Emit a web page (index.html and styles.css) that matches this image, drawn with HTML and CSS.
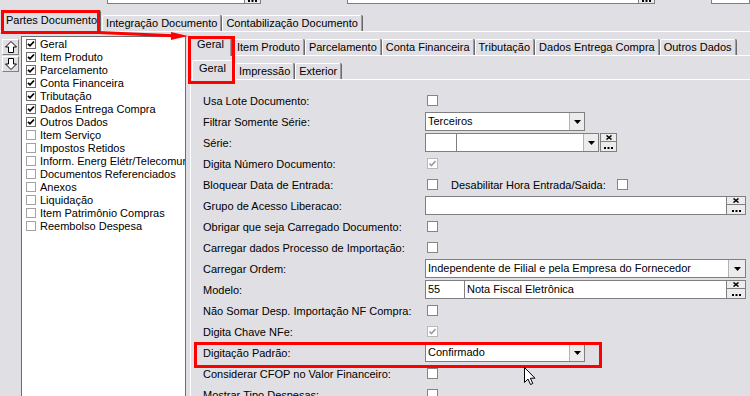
FILE: index.html
```html
<!DOCTYPE html>
<html lang="pt">
<head>
<meta charset="utf-8">
<title>Partes Documento</title>
<link rel="stylesheet" href="styles.css">
</head>
<body>
<div class="screen">
  <div class="topbar">
    <div class="tin tin-a"></div>
    <div class="tbtn"><svg width="9" height="2" viewBox="0 0 9 2"><rect x="0" y="0" width="2" height="2"/><rect x="3.5" y="0" width="2" height="2"/><rect x="7" y="0" width="2" height="2"/></svg></div>
    <div class="tin tin-b"></div>
    <div class="tbtn"><svg width="9" height="2" viewBox="0 0 9 2"><rect x="0" y="0" width="2" height="2"/><rect x="3.5" y="0" width="2" height="2"/><rect x="7" y="0" width="2" height="2"/></svg></div>
    <div class="tin tin-c"></div>
  </div>

  <div class="tabstrip main-strip">
    <div class="tab active">Partes Documento</div>
    <div class="tab">Integração Documento</div>
    <div class="tab">Contabilização Documento</div>
  </div>

  <div class="main-page">
    <div class="arrows">
      <div class="abtn"><svg width="12" height="12" viewBox="0 0 12 12"><path d="M6 0.5 L11.5 6 L8.5 6 L8.5 11.5 L3.5 11.5 L3.5 6 L0.5 6 Z" fill="#fff" stroke="#000" stroke-width="1"/></svg></div>
      <div class="abtn"><svg width="12" height="12" viewBox="0 0 12 12"><path d="M6 11.5 L11.5 6 L8.5 6 L8.5 0.5 L3.5 0.5 L3.5 6 L0.5 6 Z" fill="#fff" stroke="#000" stroke-width="1"/></svg></div>
    </div>

    <div class="list">
      <div class="item"><span class="lcb on"><svg width="8" height="8" viewBox="0 0 8 8"><path d="M1 3.8 L3 5.8 L7 1.5" fill="none" stroke="#000" stroke-width="1.8"/></svg></span>Geral</div>
      <div class="item"><span class="lcb on"><svg width="8" height="8" viewBox="0 0 8 8"><path d="M1 3.8 L3 5.8 L7 1.5" fill="none" stroke="#000" stroke-width="1.8"/></svg></span>Item Produto</div>
      <div class="item"><span class="lcb on"><svg width="8" height="8" viewBox="0 0 8 8"><path d="M1 3.8 L3 5.8 L7 1.5" fill="none" stroke="#000" stroke-width="1.8"/></svg></span>Parcelamento</div>
      <div class="item"><span class="lcb on"><svg width="8" height="8" viewBox="0 0 8 8"><path d="M1 3.8 L3 5.8 L7 1.5" fill="none" stroke="#000" stroke-width="1.8"/></svg></span>Conta Financeira</div>
      <div class="item"><span class="lcb on"><svg width="8" height="8" viewBox="0 0 8 8"><path d="M1 3.8 L3 5.8 L7 1.5" fill="none" stroke="#000" stroke-width="1.8"/></svg></span>Tributação</div>
      <div class="item"><span class="lcb on"><svg width="8" height="8" viewBox="0 0 8 8"><path d="M1 3.8 L3 5.8 L7 1.5" fill="none" stroke="#000" stroke-width="1.8"/></svg></span>Dados Entrega Compra</div>
      <div class="item"><span class="lcb on"><svg width="8" height="8" viewBox="0 0 8 8"><path d="M1 3.8 L3 5.8 L7 1.5" fill="none" stroke="#000" stroke-width="1.8"/></svg></span>Outros Dados</div>
      <div class="item"><span class="lcb"></span>Item Serviço</div>
      <div class="item"><span class="lcb"></span>Impostos Retidos</div>
      <div class="item"><span class="lcb"></span>Inform. Energ Elétr/Telecomun</div>
      <div class="item"><span class="lcb"></span>Documentos Referenciados</div>
      <div class="item"><span class="lcb"></span>Anexos</div>
      <div class="item"><span class="lcb"></span>Liquidação</div>
      <div class="item"><span class="lcb"></span>Item Patrimônio Compras</div>
      <div class="item"><span class="lcb"></span>Reembolso Despesa</div>
    </div>

    <div class="right">
      <div class="tabstrip sub-strip">
        <div class="tab active">Geral</div>
        <div class="tab">Item Produto</div>
        <div class="tab">Parcelamento</div>
        <div class="tab">Conta Financeira</div>
        <div class="tab">Tributação</div>
        <div class="tab">Dados Entrega Compra</div>
        <div class="tab">Outros Dados</div>
      </div>
      <div class="subpage">
        <div class="tabstrip sub2-strip">
          <div class="tab active">Geral</div>
          <div class="tab">Impressão</div>
          <div class="tab">Exterior</div>
        </div>
        <div class="subpage2">
          <div class="form">
            <div class="lbl">Usa Lote Documento:</div>
            <div class="ctl"><span class="cb"></span></div>

            <div class="lbl">Filtrar Somente Série:</div>
            <div class="ctl">
              <div class="combo w160"><span class="val">Terceiros</span><span class="drop"><svg width="7" height="4" viewBox="0 0 7 4"><path d="M0 0 H7 L3.5 4 Z"/></svg></span></div>
            </div>

            <div class="lbl">Série:</div>
            <div class="ctl">
              <div class="combo w174"><span class="cell c31"></span><span class="val"></span><span class="drop"><svg width="7" height="4" viewBox="0 0 7 4"><path d="M0 0 H7 L3.5 4 Z"/></svg></span></div>
              <span class="xbtn xsm"><span class="xb-top"><svg width="6" height="5" viewBox="0 0 6 5"><path d="M0.5 0.5 L5.5 4.5 M5.5 0.5 L0.5 4.5" stroke="#000" stroke-width="1.5"/></svg></span><span class="xb-bot"><svg width="9" height="2" viewBox="0 0 9 2"><rect x="0" y="0" width="2" height="2"/><rect x="3.5" y="0" width="2" height="2"/><rect x="7" y="0" width="2" height="2"/></svg></span></span>
            </div>

            <div class="lbl">Digita Número Documento:</div>
            <div class="ctl"><span class="cb dis"><svg width="9" height="9" viewBox="0 0 9 9"><path d="M1.5 4.5 L3.5 6.5 L7.5 2" fill="none" stroke="#9a9a9a" stroke-width="1.6"/></svg></span></div>

            <div class="lbl">Bloquear Data de Entrada:</div>
            <div class="ctl"><span class="cb"></span><span class="inl">Desabilitar Hora Entrada/Saida:</span><span class="cb cb2"></span></div>

            <div class="lbl">Grupo de Acesso Liberacao:</div>
            <div class="ctl">
              <div class="edit w302"></div>
              <span class="xbtn"><span class="xb-top"><svg width="6" height="5" viewBox="0 0 6 5"><path d="M0.5 0.5 L5.5 4.5 M5.5 0.5 L0.5 4.5" stroke="#000" stroke-width="1.5"/></svg></span><span class="xb-bot"><svg width="9" height="2" viewBox="0 0 9 2"><rect x="0" y="0" width="2" height="2"/><rect x="3.5" y="0" width="2" height="2"/><rect x="7" y="0" width="2" height="2"/></svg></span></span>
            </div>

            <div class="lbl">Obrigar que seja Carregado Documento:</div>
            <div class="ctl"><span class="cb"></span></div>

            <div class="lbl">Carregar dados Processo de Importação:</div>
            <div class="ctl"><span class="cb"></span></div>

            <div class="lbl">Carregar Ordem:</div>
            <div class="ctl">
              <div class="combo w321"><span class="val">Independente de Filial e pela Empresa do Fornecedor</span><span class="drop wide"><svg width="7" height="4" viewBox="0 0 7 4"><path d="M0 0 H7 L3.5 4 Z"/></svg></span></div>
            </div>

            <div class="lbl">Modelo:</div>
            <div class="ctl">
              <div class="edit w302 split"><span class="cell c39">55</span><span class="val">Nota Fiscal Eletrônica</span></div>
              <span class="xbtn"><span class="xb-top"><svg width="6" height="5" viewBox="0 0 6 5"><path d="M0.5 0.5 L5.5 4.5 M5.5 0.5 L0.5 4.5" stroke="#000" stroke-width="1.5"/></svg></span><span class="xb-bot"><svg width="9" height="2" viewBox="0 0 9 2"><rect x="0" y="0" width="2" height="2"/><rect x="3.5" y="0" width="2" height="2"/><rect x="7" y="0" width="2" height="2"/></svg></span></span>
            </div>

            <div class="lbl">Não Somar Desp. Importação NF Compra:</div>
            <div class="ctl"><span class="cb"></span></div>

            <div class="lbl">Digita Chave NFe:</div>
            <div class="ctl"><span class="cb dis"><svg width="9" height="9" viewBox="0 0 9 9"><path d="M1.5 4.5 L3.5 6.5 L7.5 2" fill="none" stroke="#9a9a9a" stroke-width="1.6"/></svg></span></div>

            <div class="lbl">Digitação Padrão:</div>
            <div class="ctl">
              <div class="combo w160"><span class="val">Confirmado</span><span class="drop"><svg width="7" height="4" viewBox="0 0 7 4"><path d="M0 0 H7 L3.5 4 Z"/></svg></span></div>
            </div>

            <div class="lbl">Considerar CFOP no Valor Financeiro:</div>
            <div class="ctl"><span class="cb"></span></div>

            <div class="lbl">Mostrar Tipo Despesas:</div>
            <div class="ctl"><span class="cb"></span></div>
          </div>
        </div>
      </div>
    </div>
  </div>

  <div class="mark mark-partes"></div>
  <div class="mark mark-geral"></div>
  <div class="mark mark-padrao"></div>
  <svg class="annot" width="750" height="396" viewBox="0 0 750 396">
    <path d="M99 32.5 L173 35.8" stroke="#ff0000" stroke-width="3" fill="none"/>
    <path d="M171 32 L188 36 L171 40 Z" fill="#ff0000"/>
  </svg>
  <svg class="cursor" width="13" height="19" viewBox="0 0 13 19">
    <path d="M0.5 0.5 L0.5 15.5 L4 12 L6.5 17.5 L8.8 16.5 L6.4 11.2 L11 11.2 Z" fill="#fff" stroke="#000" stroke-width="1"/>
  </svg>
</div>
</body>
</html>
```

FILE: styles.css
```css
* { box-sizing: border-box; }
html, body { margin: 0; padding: 0; }
body {
  background: #e0dfe3;
  font-family: "Liberation Sans", Arial, sans-serif;
  font-size: 11px;
  color: #000;
}
.screen {
  position: relative;
  width: 750px;
  height: 396px;
  overflow: hidden;
}

/* top partially visible fields */
.topbar { display: flex; height: 4px; padding-left: 107px; }
.tin { height: 4px; background: #fff; border: 1px solid #7f7f7f; border-top: 0; }
.tin-a { width: 143px; }
.tin-b { width: 302px; margin-left: 86px; }
.tin-c { width: 40px; margin-left: 56px; }
.tbtn {
  width: 17px; height: 4px; background: #ececec;
  border: 1px solid #7f7f7f; border-top: 0; border-left: 0;
  display: flex; justify-content: center; align-items: flex-start;
}
.tbtn svg, .xb-bot svg { fill: #000; display: block; }

/* tabs */
.tabstrip { display: flex; align-items: flex-end; }
.tab {
  height: 16px; line-height: 15px; padding: 0 3px;
  border-top: 1px solid #fff; border-left: 1px solid #fff;
  border-right: 1px solid #9d9da1;
  box-shadow: 1px 0 0 #6a6a6e;
  border-radius: 2px 2px 0 0;
  margin-right: 1px;
  white-space: nowrap;
  background: #e0dfe3;
}
.tab.active {
  position: relative; z-index: 1;
  height: 20px; line-height: 15px; padding: 0 6px;
  margin-bottom: -1px;
  margin-right: 2px;
}
.main-strip { height: 27px; padding-left: 3px; }
.main-strip .tab.active { height: 22px; line-height: 19px; padding: 0 2px; }
.sub-strip { height: 23px; padding-left: 4px; }
.sub2-strip { height: 23px; padding-left: 1px; }

/* main page */
.main-page {
  display: flex;
  height: 366px;
  border-top: 1px solid #fff;
}
.arrows { width: 21px; padding: 7px 0 0 2px; flex: none; }
.abtn {
  width: 17px; height: 16px; margin-bottom: 1px;
  border-top: 1px solid #fff; border-left: 1px solid #fff;
  border-right: 1px solid #808080; border-bottom: 1px solid #808080;
  display: flex; align-items: center; justify-content: center;
}
.abtn svg { display: block; }

.list {
  flex: none;
  width: 165px;
  margin-top: 4px;
  height: 400px;
  background: #fff;
  border: 1px solid #6e6e6e;
  padding: 0 0 0 4px;
  overflow: hidden;
}
.item {
  display: flex; align-items: center;
  height: 13px; white-space: nowrap;
}
.lcb {
  flex: none;
  width: 10px; height: 10px; margin-right: 4px;
  border: 1px solid #a2a2a2; background: #fff;
  display: flex; align-items: center; justify-content: center;
}
.lcb.on { border-color: #6e6e6e; }
.lcb svg { display: block; }

.right { flex: 1; min-width: 0; }
.subpage {
  margin-left: 4px;
  border-top: 1px solid #fff;
  border-left: 1px solid #fff;
  height: 400px;
}
.subpage2 {
  border-top: 1px solid #fff;
  padding: 10px 0 0 12px;
}

/* form */
.form {
  display: grid;
  grid-template-columns: 222px auto;
  grid-auto-rows: 21px;
  align-items: center;
}
.lbl { white-space: nowrap; }
.ctl { display: flex; align-items: center; }
.cb {
  display: flex; align-items: center; justify-content: center;
  width: 11px; height: 11px; margin-left: 2px;
  border: 1px solid #858585; background: #fff;
}
.cb.dis { border-color: #b9b9b9; }
.cb svg { display: block; }
.inl { margin-left: 13px; white-space: nowrap; }
.cb2 { margin-left: 11px; }

.combo, .edit {
  display: flex; height: 19px;
  background: #fff; border: 1px solid #7f7f7f;
  overflow: hidden;
}
.w160 { width: 160px; }
.w174 { width: 174px; }
.w302 { width: 302px; }
.w321 { width: 321px; }
.val { flex: 1; min-width: 0; padding-left: 2px; line-height: 17px; white-space: nowrap; overflow: hidden; }
.cell { flex: none; border-right: 1px solid #7f7f7f; padding-left: 2px; line-height: 17px; }
.c31 { width: 31px; }
.c39 { width: 39px; }
.drop {
  flex: none; width: 15px;
  background: #ececec; border-left: 1px solid #b4b4b4;
  display: flex; align-items: center; justify-content: center;
}
.drop.wide { width: 17px; }
.drop svg { display: block; fill: #000; }

.xbtn {
  flex: none;
  display: flex; flex-direction: column;
  width: 19px; height: 19px;
  border: 1px solid #7f7f7f;
  border-left: 0;
  background: #ececec;
}
.xbtn.xsm { width: 17px; margin-left: 1px; border-left: 1px solid #7f7f7f; }
.xb-top {
  height: 8px;
  display: flex; align-items: center; justify-content: center;
  border-bottom: 1px solid #7f7f7f;
}
.xb-bot {
  flex: 1;
  display: flex; align-items: flex-end; justify-content: center;
  padding-bottom: 2px;
}
.xb-top svg { display: block; }

/* annotations */
.mark { position: absolute; border: 3px solid #ff0000; pointer-events: none; z-index: 5; }
.mark-partes { left: 1px; top: 10px; width: 99px; height: 24px; }
.mark-geral { left: 188px; top: 36px; width: 47px; height: 48px; }
.mark-padrao { left: 194px; top: 342px; width: 408px; height: 26px; }
.annot { position: absolute; left: 0; top: 0; z-index: 5; pointer-events: none; }
.cursor { position: absolute; left: 524px; top: 367px; z-index: 6; }
```
